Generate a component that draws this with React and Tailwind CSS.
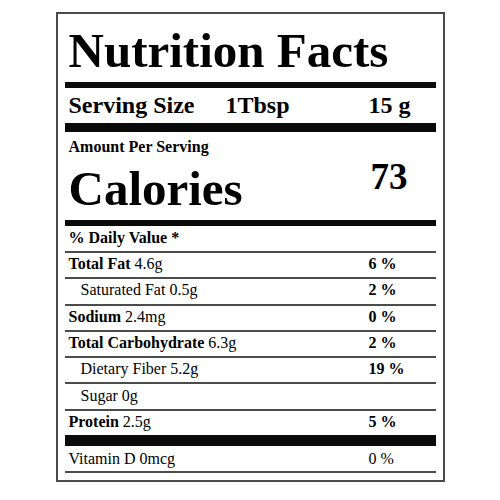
const rows = [
  { label: "Total Fat", amount: "4.6g", dv: "6 %" },
  { label: "Saturated Fat", amount: "0.5g", dv: "2 %", sub: true },
  { label: "Sodium", amount: "2.4mg", dv: "0 %" },
  { label: "Total Carbohydrate", amount: "6.3g", dv: "2 %" },
  { label: "Dietary Fiber", amount: "5.2g", dv: "19 %", sub: true },
  { label: "Sugar", amount: "0g", dv: "", sub: true },
  { label: "Protein", amount: "2.5g", dv: "5 %" },
];

function ThinLine() {
  return <div className="h-[2px] bg-[#4b4b4b]" />;
}

function NutrientRow({ label, amount, dv, sub }) {
  return (
    <div className="flex h-[24.3px] items-center pb-[2px] text-[16px] leading-[16px]">
      <div className={"w-[304px] " + (sub ? "pl-[16px]" : "pl-[4px]")}>
        {sub ? (
          <span>{label} {amount}</span>
        ) : (
          <span>
            <span className="font-bold">{label}</span> {amount}
          </span>
        )}
      </div>
      <div className="font-bold">{dv}</div>
    </div>
  );
}

export default function App() {
  return (
    <div className="bg-white w-[500px] h-[500px] pt-[12px] text-black" style={{ fontFamily: '"Liberation Serif", "Times New Roman", serif' }}>
      <div className="mx-auto w-[389px] h-[470px] border-2 border-[#4a4a4a] px-[7px]">
        <div className="h-[68px] pt-[12px] pl-[4px] text-[49px] leading-[49px] font-bold whitespace-nowrap">
          Nutrition Facts
        </div>
        <div className="h-[6px] bg-[#0a0a0a]" />

        <div className="flex h-[35px] pt-[5px] text-[24px] leading-[24px] font-bold whitespace-nowrap">
          <div className="w-[304px] pl-[4px] flex">
            <span className="w-[157px]">Serving Size</span>
            <span>1Tbsp</span>
          </div>
          <div>15 g</div>
        </div>
        <div className="h-[9px] bg-[#0a0a0a]" />

        <div className="h-[23px] pt-[7px] pl-[4px] text-[16px] leading-[16px] font-bold">
          Amount Per Serving
        </div>
        <div className="flex h-[65px] font-bold">
          <div className="w-[304px] pl-[4px] pt-[9px] text-[49px] leading-[49px]">Calories</div>
          <div className="pt-[3px] pl-[2px] text-[37px] leading-[37px]">73</div>
        </div>
        <div className="h-[6px] bg-[#0a0a0a]" />

        <div className="h-[25px] pt-[4px] pl-[4px] text-[16px] leading-[16px] font-bold">
          % Daily Value *
        </div>
        <ThinLine />

        {rows.map((r, i) => (
          <div key={r.label}>
            <NutrientRow {...r} />
            {i < rows.length - 1 && <ThinLine />}
          </div>
        ))}

        <div className="h-[11px] bg-[#0a0a0a]" />
        <div className="flex h-[25px] items-center text-[16px] leading-[16px]">
          <div className="w-[304px] pl-[4px]">Vitamin D 0mcg</div>
          <div>0 %</div>
        </div>
        <ThinLine />
      </div>
    </div>
  );
}
